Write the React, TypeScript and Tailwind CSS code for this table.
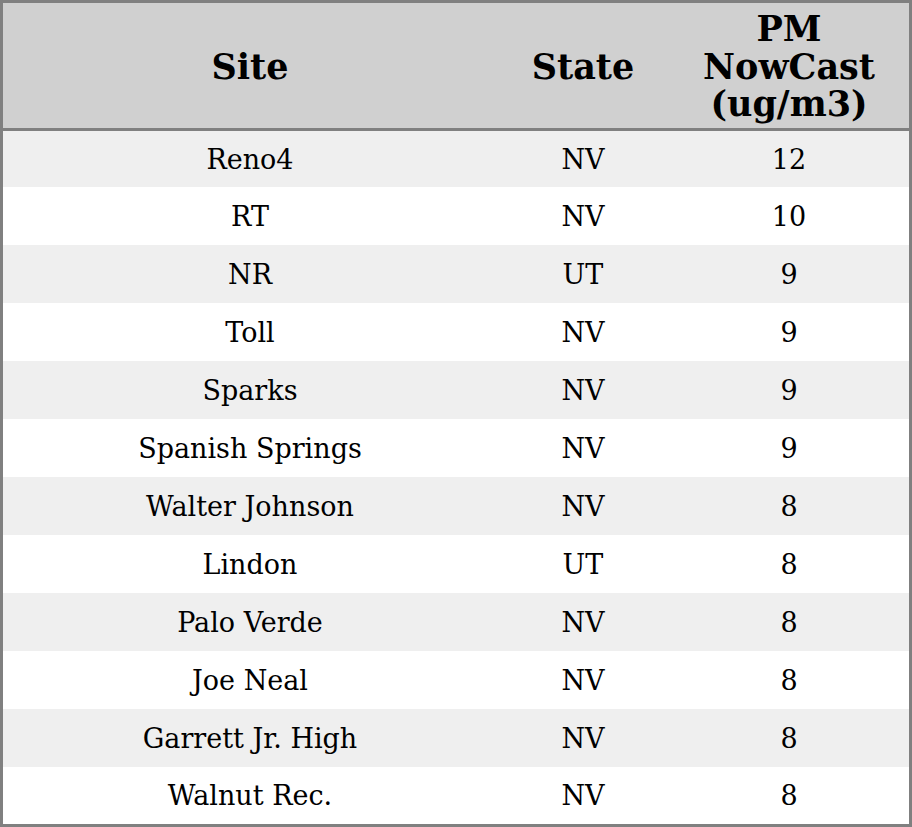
const rows = [
  { site: "Reno4", state: "NV", pm: "12" },
  { site: "RT", state: "NV", pm: "10" },
  { site: "NR", state: "UT", pm: "9" },
  { site: "Toll", state: "NV", pm: "9" },
  { site: "Sparks", state: "NV", pm: "9" },
  { site: "Spanish Springs", state: "NV", pm: "9" },
  { site: "Walter Johnson", state: "NV", pm: "8" },
  { site: "Lindon", state: "UT", pm: "8" },
  { site: "Palo Verde", state: "NV", pm: "8" },
  { site: "Joe Neal", state: "NV", pm: "8" },
  { site: "Garrett Jr. High", state: "NV", pm: "8" },
  { site: "Walnut Rec.", state: "NV", pm: "8" },
];

export default function App() {
  return (
    <div
      className="w-[912px] h-[827px] border-[3px] border-[#808080] bg-white flex flex-col text-black"
      style={{ fontFamily: '"DejaVu Serif", serif' }}
    >
      <div className="h-[128px] shrink-0 grid grid-cols-[494px_172px_1fr] items-center bg-[#d0d0d0] border-b-[3px] border-[#808080] text-[35px] leading-[37.5px] font-bold text-center pt-[2px]">
        <div>Site</div>
        <div>State</div>
        <div>
          PM
          <br />
          NowCast
          <br />
          (ug/m3)
        </div>
      </div>
      <div className="flex-1 flex flex-col">
        {rows.map((r, i) => (
          <div
            key={i}
            className={`grid grid-cols-[494px_172px_1fr] items-center text-center text-[27px] pt-[2px] ${
              i === 0 ? "h-[56px]" : i === rows.length - 1 ? "flex-1" : "h-[58px]"
            } ${i % 2 === 0 ? "bg-[#efefef]" : "bg-white"}`}
          >
            <div>{r.site}</div>
            <div>{r.state}</div>
            <div>{r.pm}</div>
          </div>
        ))}
      </div>
    </div>
  );
}
